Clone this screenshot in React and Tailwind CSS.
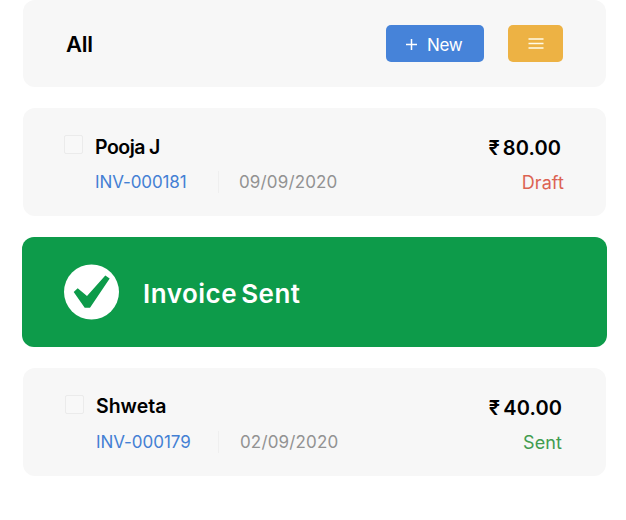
import React from "react";

function Header() {
  return (
    <header className="mx-px flex h-[87px] items-center rounded-[12px] bg-[#f7f7f7] px-[43px] pb-px">
      <h1 className="grow pt-px text-[22px] leading-[22px] font-semibold tracking-[-0.3px] text-black">All</h1>
      <button className="mt-px flex h-[37px] w-[98px] items-center rounded-[5px] bg-[#4683d9] pl-5 text-white">
        <svg className="mt-[2px]" width="11" height="11" viewBox="0 0 11 11" stroke="currentColor" strokeWidth="1.5">
          <path d="M0 5.5h11M5.5 0v11" />
        </svg>
        <span className="ml-[10px] pt-[2px] text-[17px] leading-5 font-normal tracking-[-0.3px]">New</span>
      </button>
      <button className="mt-px ml-6 flex h-[37px] w-[55px] items-center justify-center rounded-[5px] bg-[#edb244] text-[#fffbe8]">
        <svg className="ml-px" width="16" height="13" viewBox="0 0 16 13" stroke="currentColor" strokeWidth="1.7">
          <path d="M0.5 2h15M0.5 6.5h15M0.5 11h15" />
        </svg>
      </button>
    </header>
  );
}

function InvoiceCard({ children, className }) {
  return (
    <article className={`mx-px mt-[21px] flex h-[108px] items-start rounded-[12px] bg-[#f7f7f7] ${className}`}>
      {children}
    </article>
  );
}

function Checkbox() {
  return <span className="mt-[27px] size-[19px] shrink-0 rounded-[2px] border border-[#ebebeb] bg-[#f8f8f8]" />;
}

export default function App() {
  return (
    <main className="h-[520px] w-[626px] overflow-hidden bg-white pr-[19px] pl-[22px] font-['Inter','Liberation_Sans',sans-serif] whitespace-nowrap">
      <Header />

      <InvoiceCard className="pr-[42px] pl-[41px]">
        <Checkbox />
        <div className="ml-[12px] grow pt-[29px]">
          <h2 className="text-[19.5px] leading-5 font-semibold tracking-[-0.5px] [word-spacing:-0.5px] text-black">Pooja J</h2>
          <div className="mt-[13px] flex h-6 items-center text-[17px] leading-6">
            <span className="w-[123px] font-normal tracking-[-0.1px] text-[#4480d4]">INV-000181</span>
            <span className="h-[22px] w-px bg-[#efefef]" />
            <span className="ml-[20px] font-normal tracking-[0.15px] text-[#929292]">09/09/2020</span>
          </div>
        </div>
        <div className="flex flex-col items-end pt-[30px]">
          <span className="mr-[3px] text-[20px] leading-5 font-semibold tracking-[0.1px] [word-spacing:-2px] text-black">₹ 80.00</span>
          <span className="mt-[13px] text-[18px] leading-6 font-normal tracking-[0.1px] text-[#dc6352]">Draft</span>
        </div>
      </InvoiceCard>

      <section className="mt-[21px] flex h-[110px] items-center rounded-[12px] bg-[#0d9b4a] pl-[42px] text-white">
        <svg width="55" height="56" viewBox="0 0 55 56">
          <circle cx="27.5" cy="28" r="27.5" fill="white" />
          <path d="M9.7 28 13.7 24.2 23 32 41.3 11.5 45.7 14.5 26 43.8H20.7Z" fill="#0d9b4a" />
        </svg>
        <p className="ml-[24px] pt-[3px] text-[26px] leading-8 font-semibold tracking-[0.5px] [word-spacing:-3px]">Invoice Sent</p>
      </section>

      <InvoiceCard className="pr-[44px] pl-[42px]">
        <Checkbox />
        <div className="ml-[12px] grow pt-[28px]">
          <h2 className="text-[19.5px] leading-5 font-semibold text-black">Shweta</h2>
          <div className="mt-[14px] flex h-6 items-center text-[17px] leading-6">
            <span className="w-[122px] font-normal tracking-[-0.05px] text-[#4480d4]">INV-000179</span>
            <span className="h-[22px] w-px bg-[#efefef]" />
            <span className="ml-[21px] font-normal tracking-[0.15px] text-[#929292]">02/09/2020</span>
          </div>
        </div>
        <div className="flex flex-col items-end pt-[30px]">
          <span className="text-[20px] leading-5 font-semibold tracking-[0.1px] [word-spacing:-2px] text-black">₹ 40.00</span>
          <span className="mt-[13px] text-[18px] leading-6 font-normal tracking-[0.1px] text-[#419c50]">Sent</span>
        </div>
      </InvoiceCard>
    </main>
  );
}
